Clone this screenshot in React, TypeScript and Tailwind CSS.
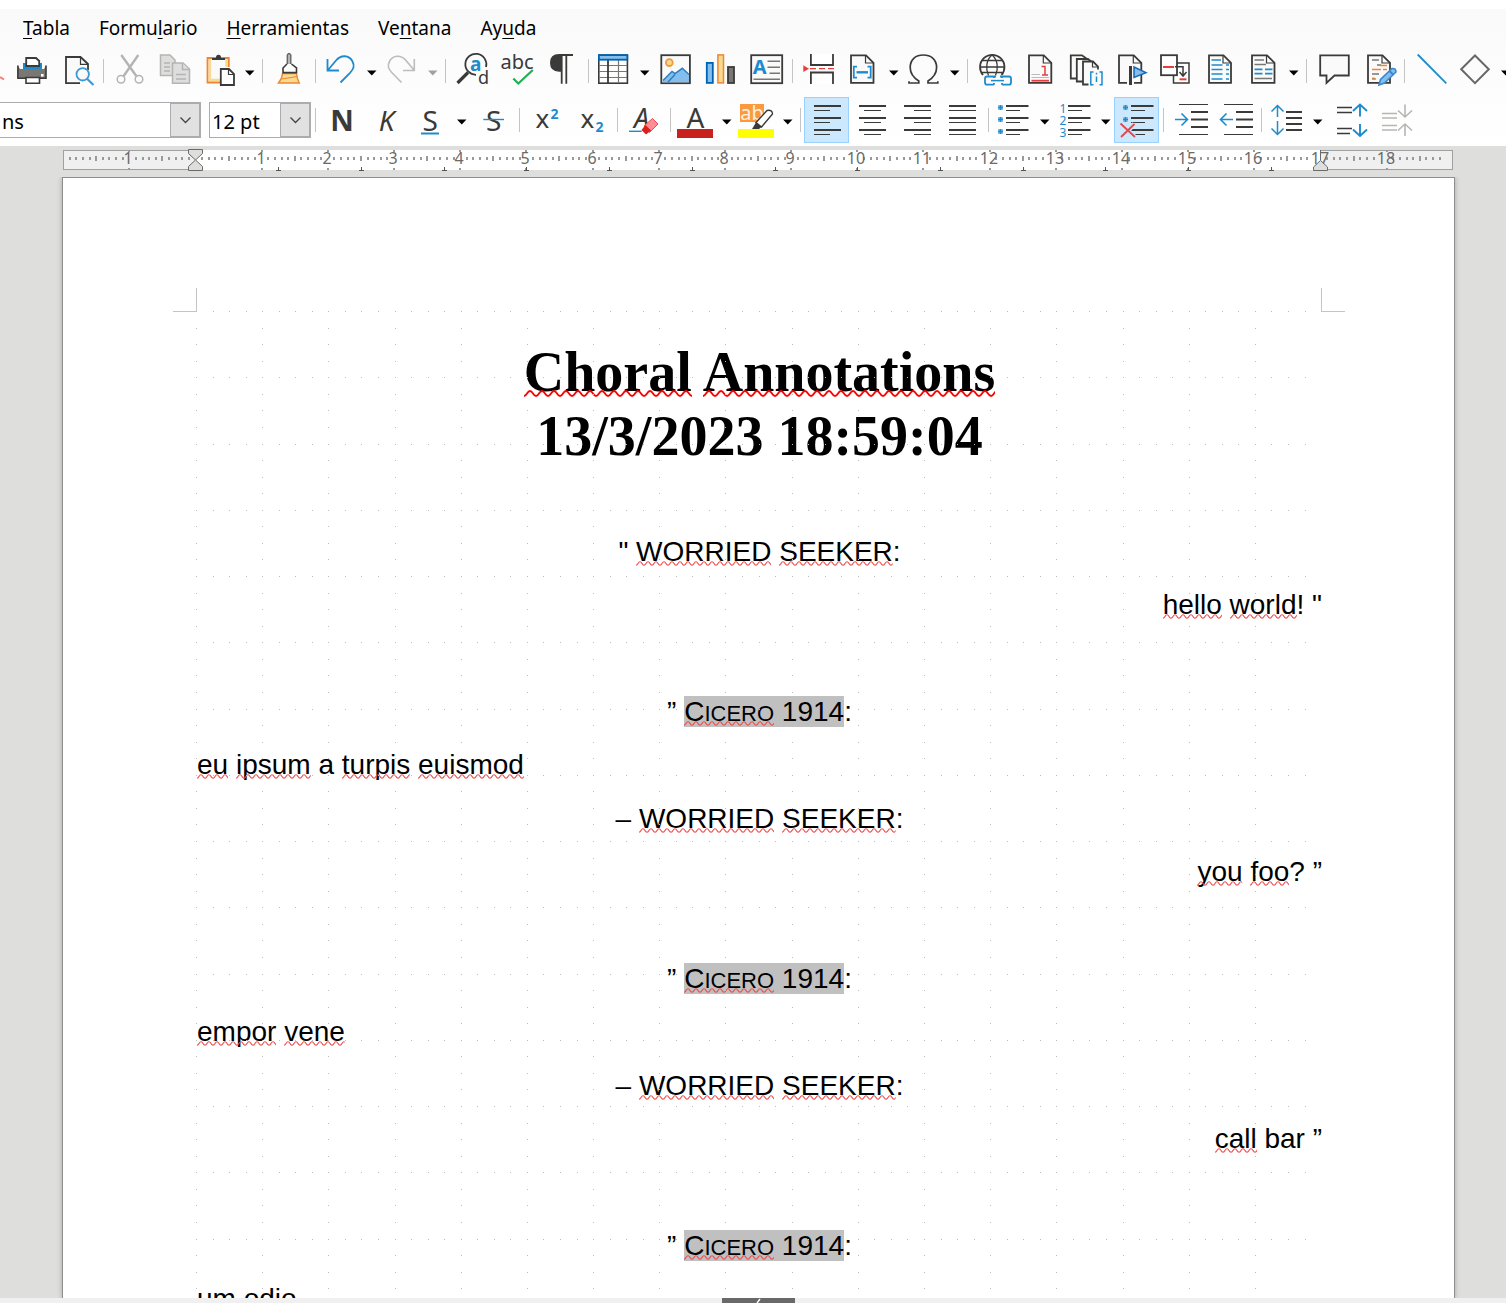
import React from "react";

const DARK = "#3a3a38";
const BLUE = "#1e8bcd";
const LIGHT_BLUE = "#83beec";
const DEEP_BLUE = "#0063b1";
const GRAY = "#797774";
const PALE = "#b4b4b2";
const ORANGE = "#ed8733";
const SAND = "#f8db8f";
const RED = "#e93d3d";

type Kids = { children?: React.ReactNode };

function Icon({ children }: Kids) {
  return (
    <svg
      aria-hidden="true"
      width="33"
      height="33"
      viewBox="0 0 33 33"
      fill="none"
      stroke={DARK}
      strokeWidth="1.8"
      className="block shrink-0 overflow-visible font-['Noto_Sans',sans-serif]"
    >
      {children}
    </svg>
  );
}

/* Sheet of paper with a folded corner, from x to x + w. */
function Sheet({ x = 4, w = 22.5 }: { x?: number; w?: number }) {
  const r = x + w;
  return (
    <>
      <path d={`M${x} 1.3H${r - 7.5}L${r} 8.8V28.8H${x}Z`} fill="#fafafa" />
      <path d={`M${r - 8} 1.3V9H${r}`} strokeWidth="1.2" />
    </>
  );
}

function Glyph({
  x,
  y,
  size,
  fill = DARK,
  bold,
  italic,
  children,
}: Kids & { x: number; y: number; size: number; fill?: string; bold?: boolean; italic?: boolean }) {
  return (
    <text
      x={x}
      y={y}
      fontSize={size}
      fill={fill}
      stroke="none"
      textAnchor="middle"
      fontWeight={bold ? 700 : 400}
      fontStyle={italic ? "italic" : "normal"}
    >
      {children}
    </text>
  );
}

function Paragraph({ long, short }: { long: [number, number]; short: [number, number] }) {
  return (
    <>
      {[3, 15, 27].map((y) => (
        <path key={y} d={`M${long[0]} ${y}H${long[1]}`} strokeWidth="2" />
      ))}
      {[7.5, 19.5, 31.5].map((y) => (
        <path key={y} d={`M${short[0]} ${y}H${short[1]}`} strokeWidth="1" />
      ))}
    </>
  );
}

function ListRows({ x }: { x: number }) {
  return (
    <>
      {[3, 15, 27].map((y) => (
        <React.Fragment key={y}>
          <path d={`M${x} ${y}H${x + 22.5}`} strokeWidth="2" />
          <path d={`M${x} ${y + 4.5}H${x + 14}`} strokeWidth="1" />
        </React.Fragment>
      ))}
    </>
  );
}

function Dots({ x, rows }: { x: number; rows: number[] }) {
  return (
    <>
      {rows.map((y) => (
        <React.Fragment key={y}>
          <rect x={x - 2.5} y={y - 2.5} width="5" height="5" fill="#8cc4e8" stroke="none" />
          <path d={`M${x - 2.5} ${y}H${x + 2.5}M${x} ${y - 2.5}V${y + 2.5}`} stroke={BLUE} strokeWidth="1.6" />
        </React.Fragment>
      ))}
    </>
  );
}

const icons: Record<string, React.ReactNode> = {
  print: (
    <>
      <path d="M2.9 11.5V24.2H31V11.5L29 15H5Z" fill={GRAY} stroke="none" />
      <rect x="2.5" y="15" width="28.5" height="9" fill={GRAY} stroke="none" />
      <path d="M2.9 11.5V24.2H31V11.5" strokeWidth="1.6" />
      <rect x="8" y="9" width="19" height="6" fill={BLUE} stroke="none" />
      <path d="M11.2 12V4H21L24.2 7V12Z" fill="#fff" />
      <path d="M11 23.5V29.2H24.5V23.5Z" fill="#fff" strokeWidth="1.6" />
      <rect x="26" y="20" width="2.6" height="2.6" fill="#fff" stroke="none" />
    </>
  ),
  preview: (
    <>
      <path d="M28 16V10L20.5 3H6V29.2H20" fill="#fafafa" />
      <path d="M20.5 3V10.4H28" strokeWidth="1.2" />
      <circle cx="22.7" cy="20.3" r="6.2" stroke="#3a9ad6" fill="#fafafa" />
      <path d="M27 24.8L33.5 31" stroke="#3a9ad6" strokeWidth="2.2" />
    </>
  ),
  cut: (
    <>
      <path d="M8.3 1L23.5 22.3M25.3 1L10.5 22.3" stroke={PALE} strokeWidth="2.4" />
      <circle cx="8" cy="25.3" r="3.8" stroke={PALE} strokeWidth="1.5" />
      <circle cx="26" cy="25.3" r="3.8" stroke={PALE} strokeWidth="1.5" />
    </>
  ),
  copy: (
    <g stroke={PALE} fill="#dedede" strokeWidth="1.5">
      <path d="M2.5 1H12L17 6V21.5H2.5Z" />
      <path d="M6 9H12M6 13H12M6 17H12" />
      <path d="M14.5 9H25L31.5 15V29.2H14.5Z" />
      <path d="M24.5 9V15.5H31M18 20.5H28M18 25H28" />
    </g>
  ),
  paste: (
    <>
      <path d="M4.5 4V28.5H25.8V4Z" fill="#fafafa" stroke="none" />
      <path d="M7 4V26H17M23.5 4V13" stroke={SAND} strokeWidth="2.4" />
      <path d="M9 4H4.5V28.5H17M22 4H25.8V13" stroke={ORANGE} />
      <path d="M9 6V3.5H13Q13 .8 15.5 .8T18 3.5H22V6Z" fill={DARK} stroke="none" />
      <path d="M17.8 15H26L31 20V31H17.8Z" fill="#fff" />
      <path d="M25.5 15V20.5H31" strokeWidth="1.2" />
    </>
  ),
  brush: (
    <>
      <path d="M10.5 19.5H24.5Q25 25 27.3 29H6.5Q10 25 10.5 19.5Z" fill={SAND} stroke={ORANGE} strokeWidth="1.4" />
      <path d="M10 25L25 22.5" stroke={ORANGE} strokeWidth="1.2" />
      <path d="M15.3 10V1Q17 -2 18.8 1V10" fill="#b5b5b5" stroke="#666" strokeWidth="1.4" />
      <path d="M15 10L11 14V18.6H24.5V14L19.5 10" fill="#fff" strokeWidth="1.6" />
    </>
  ),
  undo: (
    <path
      d="M2.5 5V16.5H14M3 16L11 6.5C16 .5 24 1 27.3 7C30 12 28.5 15 25 18.8L15.5 28.5"
      stroke={BLUE}
    />
  ),
  redo: (
    <path
      d="M28.3 5V16.5H17M28 16L20 6.5C15 .5 7 1 3.7 7C1 12 2.5 15 6 18.8L15.5 28.5"
      stroke="#bcbcba"
      strokeWidth="1.6"
    />
  ),
  find: (
    <>
      <path d="M31 13A10.5 10.5 0 1 0 21 20.8" />
      <path d="M13 18.5L2.5 29" strokeWidth="3.2" />
      <Glyph x={20.8} y={16.5} size={19} fill={BLUE} bold>a</Glyph>
      <Glyph x={28.6} y={29.6} size={18}>d</Glyph>
    </>
  ),
  spell: (
    <>
      <Glyph x={17} y={15} size={20}>abc</Glyph>
      <path d="M13.3 24.5L18.3 29.5L32.8 16" stroke="#1eb053" strokeWidth="2.2" />
    </>
  ),
  pilcrow: (
    <>
      <path d="M16.5 0H14Q5 0 5 8.8T14 17.7H16.5Z" fill={DARK} stroke="none" />
      <path d="M14 1H28M16.7 1V29.7M21.3 1V29.7" />
    </>
  ),
  table: (
    <>
      <rect x=".8" y="1.2" width="28.6" height="28" fill="#fff" stroke={DARK} strokeWidth="1.6" />
      <path d="M1 11.5H29M1 17.5H29M1 23.5H29M20.5 6V29" stroke={GRAY} strokeWidth="1.2" />
      <path d="M10 6V29" />
      <rect x=".9" y="1.1" width="28.4" height="4.6" fill={LIGHT_BLUE} stroke={DEEP_BLUE} />
    </>
  ),
  image: (
    <>
      <rect x="2.3" y="1.2" width="28.6" height="28" fill="#fafafa" />
      <circle cx="10.3" cy="8.6" r="3.4" fill={SAND} stroke="#f0983f" />
      <path d="M3.5 27L13.5 17.5L16 19L23.3 14.5L30 20.5V28.3H3.5Z" fill={LIGHT_BLUE} stroke="none" />
      <path d="M4 26.5L13 17.5L16 19.5L23.3 14.3L30 20.5M9 28L16 20.5" stroke="#2a7fc4" strokeWidth="1.5" />
    </>
  ),
  chart: (
    <>
      <rect x="2.8" y="8.9" width="6" height="20" fill={LIGHT_BLUE} stroke={DEEP_BLUE} />
      <rect x="13.9" y=".9" width="5.6" height="28" fill={SAND} stroke={ORANGE} strokeWidth="1.5" />
      <rect x="24" y="13" width="6" height="16" fill={GRAY} />
    </>
  ),
  textbox: (
    <>
      <rect x="2.2" y="1.2" width="31" height="28" fill="#fafafa" />
      <Glyph x={10.7} y={20.2} size={20} fill={BLUE} bold>A</Glyph>
      <path d="M18.5 7.3H31M18.5 13.3H31M20.5 19.3H31M4.5 25.3H31" stroke={GRAY} strokeWidth="1.6" />
    </>
  ),
  pagebreak: (
    <>
      <path d="M8.9 0V11H31V0M8.9 30V18.5H31V30" fill="#fff" />
      <path d="M1.3 11.3L7 14.7L1.3 18Z" fill={RED} stroke="none" />
      <path d="M8 14.7H32" stroke={RED} strokeWidth="1.2" strokeDasharray="6 3" />
    </>
  ),
  field: (
    <>
      <Sheet x={4} />
      <path d="M10 12.7H6.8V23.7H10M20.5 12.7H23.7V23.7H20.5" stroke={BLUE} />
      <path d="M9.5 18.3H21" stroke={BLUE} strokeWidth="2.4" />
    </>
  ),
  omega: (
    <path
      d="M1 27.3V29H10.8V27C6 24 2.2 20 2.2 13.5C2.2 5 8 1 15.3 1S28.6 5 28.6 13.5C28.6 20 24.8 24 20 27V29H29.8V27.3"
      strokeWidth="1.7"
    />
  ),
  link: (
    <>
      <path d="M6 21A12.2 12.2 0 1 1 24.5 21" />
      <path d="M11.5 21.5C8.5 15 9 6 15 1C21 6 21.500 15 18.5 21.500" strokeWidth="1.3" />
      <path d="M3 13H27M5 6.5H25M4.5 18.5H25.5" strokeWidth="1.3" />
      <path
        d="M19 22.5H10Q8 22.5 8 24.5V28.5Q8 30.7 10 30.7H17M23 22.500H32Q34 22.5 34 24.5V28.5Q34 30.7 32 30.7H25M17 22.500V24M25 22.500V24M17 29V30.7M25 29V30.7"
        fill="#fafafa"
        stroke={BLUE}
      />
      <path d="M14 26.6H27" stroke={BLUE} strokeWidth="1.5" />
    </>
  ),
  footnote: (
    <>
      <Sheet x={7} w={22.3} />
      <path d="M9.5 20.5H18M9.5 23.5H27" stroke="#bbb" strokeWidth="1.1" />
      <path d="M9.5 26.7H27" stroke={RED} />
      <path d="M19.5 12.5H23V21M20 21H26" stroke={RED} strokeWidth="1.5" />
    </>
  ),
  endnote: (
    <>
      <path d="M3.8 1.3H15L20 5V24.5H3.8Z" fill="#fafafa" />
      <path d="M9.8 5H21L26 9V27.5H9.8Z" fill="#fafafa" />
      <path d="M16 7.5H26L31 12.5V30.5H16Z" fill="#fafafa" />
      <path d="M25.5 7.5V13H31" strokeWidth="1.2" />
      <rect x="21.500" y="15.500" width="16" height="17" fill="#fafafa" stroke="none" />
      <path d="M26.5 18H23.8V30.7H26.5M32.5 18H35V30.7H32.5M29.5 22.5V28M29.5 18.8V20.5" stroke={BLUE} strokeWidth="1.5" />
    </>
  ),
  bookmark: (
    <>
      <Sheet x={7} w={22.3} />
      <path d="M18.5 11V31.5" stroke="#fafafa" strokeWidth="7" />
      <path d="M18.5 12V31" strokeWidth="3" />
      <path d="M22 13L34 18.6L22 23.5Z" fill={LIGHT_BLUE} stroke="#1768b8" strokeWidth="1.5" />
    </>
  ),
  crossref: (
    <>
      <rect x="16.5" y="9" width="15.5" height="20" fill="#fff" strokeWidth="1.5" />
      <rect x="4" y="1.2" width="16" height="20" fill="#fff" />
      <path d="M6 13H17" stroke={RED} strokeWidth="2" />
      <path d="M18 12.7H26V21.5M22.5 18L26 22L29.5 18" strokeWidth="1.5" />
      <path d="M22.5 25.3H29.5" stroke={RED} strokeWidth="2" />
    </>
  ),
  headers: (
    <>
      <Sheet x={7} w={22} />
      <path d="M9.5 6H19M9.5 11H20.5M9.5 15.5H20.5M9.5 20H20.5M9.5 25H20.5M24 11H27M24 15.5H27M24 20H27M24 25H27" stroke={BLUE} strokeWidth="1.7" />
    </>
  ),
  columns: (
    <>
      <Sheet x={5} w={22.5} />
      <path d="M7.5 6H17M7.5 10.5H19M7.5 24.5H25" stroke={GRAY} strokeWidth="1.4" />
      <path d="M7.5 15.3H15.5M18 15.3H25.5M7.5 19.7H15.5M18 19.7H25.5" stroke={BLUE} strokeWidth="1.7" />
    </>
  ),
  comment: <path d="M4.2 1.3H32.8V21.5H18.5L10.5 29V21.5H4.2Z" fill="#fafafa" />,
  track: (
    <>
      <Sheet x={7} w={22} />
      <path d="M11 6H18M16 11H20M11 20H18M11 24.5H14" stroke={GRAY} strokeWidth="1.3" />
      <path d="M11 15.5H20M19 11.5H26M22 15.5H26M11 25H15" stroke={ORANGE} strokeWidth="1.6" />
      <path d="M18 31L19.5 25.5L31 14.5Q35 14 35 18L23.5 29Z" fill={LIGHT_BLUE} stroke="#3a87cf" strokeWidth="1.6" />
      <path d="M28.5 17L32.5 21" stroke="#3a87cf" />
    </>
  ),
  line: <path d="M3.7 .5L32.3 29.3" stroke={BLUE} />,
  diamond: <path d="M16 1.5L29.8 15.3L16 29.2L2.2 15.3Z" stroke="#666" strokeWidth="2" />,
  bold: <Glyph x={17} y={28} size={29} bold>N</Glyph>,
  italic: <Glyph x={16.5} y={28} size={28} italic>K</Glyph>,
  underline: (
    <>
      <Glyph x={15.3} y={28} size={28}>S</Glyph>
      <path d="M6 30.5H24" stroke={BLUE} strokeWidth="2" />
    </>
  ),
  strike: (
    <>
      <Glyph x={17.7} y={28} size={28}>S</Glyph>
      <path d="M7.3 16.5H28" stroke={BLUE} strokeWidth="1.4" />
    </>
  ),
  superscript: (
    <>
      <Glyph x={13.3} y={25} size={26}>x</Glyph>
      <Glyph x={25.5} y={15.7} size={14} fill={BLUE} bold>2</Glyph>
    </>
  ),
  subscript: (
    <>
      <Glyph x={13.3} y={25} size={26}>x</Glyph>
      <Glyph x={25.5} y={29} size={14} fill={BLUE} bold>2</Glyph>
    </>
  ),
  clear: (
    <>
      <Glyph x={14.5} y={25} size={27} italic>A</Glyph>
      <path d="M2 28.3H14.7" stroke={BLUE} strokeWidth="1.4" />
      <path d="M17 23L25.5 15.5L31 21L22.5 29.5Z" fill="#ff8d93" stroke="#f0494f" strokeWidth="1" />
      <path d="M14.5 27L18.5 22L24 27.5L19 31.5Z" fill="#d8201c" stroke="none" />
    </>
  ),
  fontcolor: (
    <>
      <Glyph x={15.5} y={25} size={28}>A</Glyph>
      <rect x="-3" y="26" width="36" height="9" fill="#c9211e" stroke="none" />
    </>
  ),
  highlight: (
    <>
      <rect x="-1" y="1" width="24" height="18" fill="#fb9a3c" stroke="none" />
      <Glyph x={11} y={17} size={20} fill="#fff0dc">ab</Glyph>
      <path d="M15 19.500L26 7.5Q31.5 6.5 31.5 11L20.500 24Z" fill="#fff" strokeWidth="1.4" />
      <path d="M11 26L15 19.5L20.5 24L18 26Z" fill={DARK} stroke="none" />
      <rect x="-3" y="26" width="36" height="9" fill="#ffff00" stroke="none" />
    </>
  ),
  left: <Paragraph long={[4, 31]} short={[4, 20]} />,
  center: <Paragraph long={[4, 31]} short={[9, 26]} />,
  right: <Paragraph long={[4, 31]} short={[14, 31]} />,
  justify: <Paragraph long={[4, 31]} short={[4, 31]} />,
  bullets: (
    <>
      <Dots x={2.5} rows={[4.5, 16.5, 28.5]} />
      <ListRows x={8} />
    </>
  ),
  numbers: (
    <>
      <Glyph x={4} y={9.5} size={12} fill={BLUE}>1</Glyph>
      <Glyph x={4} y={21.5} size={12} fill={BLUE}>2</Glyph>
      <Glyph x={4} y={33.5} size={12} fill={BLUE}>3</Glyph>
      <ListRows x={9} />
    </>
  ),
  nolist: (
    <>
      <Dots x={5.5} rows={[4.5, 16.5]} />
      <ListRows x={11} />
      <path d="M1 21L14.5 34M14.5 21L1 34" stroke="#cce8ff" strokeWidth="5" />
      <path d="M.5 20.5L15 34M14.5 21L1 34" stroke="#e0484c" strokeWidth="1.8" />
    </>
  ),
  indent: (
    <>
      <path d="M6 1.5H35M6 31.5H35" strokeWidth="1.2" />
      <path d="M18 9H35M18 16.5H35M18 24H35" strokeWidth="2" />
      <path d="M2 16.5H14.5M8.5 10.5L14.5 16.5L8.5 22.5" stroke={BLUE} strokeWidth="1.6" />
    </>
  ),
  outdent: (
    <>
      <path d="M6 1.5H35M6 31.5H35" strokeWidth="1.2" />
      <path d="M18 9H35M18 16.5H35M18 24H35" strokeWidth="2" />
      <path d="M2.5 16.5H15M8.5 10.5L2.5 16.5L8.5 22.5" stroke={BLUE} strokeWidth="1.6" />
    </>
  ),
  spacing: (
    <>
      <path d="M15 9H31M15 15H31M15 21H31M15 27H31" strokeWidth="2" />
      <path d="M6.5 2.5V14M.5 8.5L6.5 2.5L12.5 8.5M6.5 18V31.5M.5 25.5L6.5 31.5L12.5 25.5" stroke={BLUE} strokeWidth="1.5" />
    </>
  ),
  spaceMore: (
    <>
      <path d="M5 4.5H20M5 9.5H20M5 25.5H20M5 30.5H18" strokeWidth="1.7" />
      <path d="M28 1.5V13.5M21 8L28 1.5L35 8M28 21V33M21 26.5L28 33L35 26.5" stroke={BLUE} strokeWidth="1.9" />
    </>
  ),
  spaceLess: (
    <g stroke="#b6b6b4" strokeWidth="1.6">
      <path d="M5 10.5H20M5 15H20M5 22.5H20M5 27H20" />
      <path d="M28 1.5V13.5M21 7.5L28 14L35 7.5M28 21V33M21 27.5L28 21L35 27.5" />
    </g>
  ),
};

function Tool({ name, label, active }: { name: string; label: string; active?: boolean }) {
  return (
    <button
      type="button"
      aria-label={label}
      aria-pressed={active}
      className={
        active
          ? "flex h-[46px] w-[45px] shrink-0 items-start border border-[#99d1ff] bg-[#cce8ff] px-[5px] pt-[5px]"
          : "flex h-[46px] w-[45px] shrink-0 items-start border border-transparent px-[5px] pt-[5px]"
      }
    >
      <Icon>{icons[name]}</Icon>
    </button>
  );
}

function Drop({ label, muted }: { label: string; muted?: boolean }) {
  return (
    <button type="button" aria-label={label} className="flex h-[46px] w-4 shrink-0 items-center justify-center">
      <svg aria-hidden="true" width="10" height="6" viewBox="0 0 10 6" className="mt-1 block">
        <path d="M0 .5H9.5L4.8 5.5Z" fill={muted ? "#a0a0a0" : "#000"} />
      </svg>
    </button>
  );
}

function Sep() {
  return (
    <div className="flex h-[46px] w-2 shrink-0 items-center justify-center">
      <div className="h-6 w-px bg-[#c4c4c4]" />
    </div>
  );
}

function Combo({ id, label, value, field }: { id: string; label: string; value: string; field: string }) {
  return (
    <div className="flex h-9 shrink-0 border border-[#acacb0] bg-white">
      <input
        id={id}
        aria-label={label}
        defaultValue={value}
        className={`${field} min-w-0 bg-transparent pt-[3px] font-['Noto_Sans',sans-serif] text-[20px] text-black outline-none`}
      />
      <button
        type="button"
        aria-label={`${label}: abrir`}
        className="flex w-[30px] items-center justify-center border border-[#acacb0] bg-[#e1e1e1]"
      >
        <svg aria-hidden="true" width="11" height="7" viewBox="0 0 11 7" fill="none" stroke="#444" strokeWidth="1.3">
          <path d="M.5 .5L5.5 5.5L10.5 .5" />
        </svg>
      </button>
    </div>
  );
}

const menus: [string, string, string][] = [
  ["", "T", "abla"],
  ["Formu", "l", "ario"],
  ["", "H", "erramientas"],
  ["Ve", "n", "tana"],
  ["Ay", "u", "da"],
];

const CM = 66.18;

function Ruler() {
  const zero = 132.5;
  const marks: React.ReactNode[] = [];
  for (let i = -19; i <= 189; i++) {
    const x = Math.round(zero + (i * CM) / 10);
    if (i === 0 || i === 170) continue;
    if (i % 10 === 0) {
      marks.push(<rect key={i} x={x - 1} y="0" width="2" height="2" />);
      marks.push(<rect key={`${i}b`} x={x - 1} y="18" width="2" height="2" />);
    } else if (i % 5 === 0) {
      marks.push(<rect key={i} x={x - 1} y="6" width="2" height="5" />);
    } else if (!(i > 95 && i % 10 === 9)) {
      marks.push(<rect key={i} x={x - 1} y="7" width="2" height="3" />);
    }
  }
  const tabs = Array.from({ length: 13 }, (_, k) => Math.round(zero + (k + 1) * 1.25 * CM) + 0.5);
  const labels = [-1, ...Array.from({ length: 18 }, (_, k) => k + 1)];
  return (
    <svg
      role="img"
      aria-label="Regla horizontal"
      width="1392"
      height="23"
      viewBox="0 0 1392 23"
      className="block shrink-0 overflow-visible font-['Noto_Sans',sans-serif]"
    >
      <rect x=".5" y=".5" width="1389" height="19" fill="#f0f0f0" stroke="#a0a0a0" />
      <rect x="132" y="0" width="1125" height="20" fill="#fff" />
      <g fill="#9a9a9a">{marks}</g>
      <g fill="#6a6a6a" fontSize="16" textAnchor="middle">
        {labels.map((n) => (
          <text key={n} x={Math.round(zero + n * CM) - 1} y="14">
            {Math.abs(n)}
          </text>
        ))}
      </g>
      <path d={tabs.map((x) => `M${x} 17V20M${x - 2.5} 20.5H${x + 2.5}`).join("")} stroke="#555" />
      <g fill="#dededc" stroke="#6a6a6a">
        <path d="M125.5 -.5H139.5V3.5L132.5 10L125.5 3.5Z" />
        <path d="M125.5 20.5H139.5V16.5L132.5 10L125.5 16.5Z" />
        <path d="M1257.5 0V10" />
        <path d="M1250.5 20.5H1264.5V17L1257.5 10.5L1250.5 17Z" />
      </g>
    </svg>
  );
}

/* Snap grid: one line of dots per centimetre, four dots between lines. */
function DotGrid() {
  let d = "";
  for (let row = 0; row <= 64; row++) {
    const y = Math.round((row * 66.25) / 4) + 0.5;
    for (let col = 0; col <= 67; col++) {
      if (row % 4 !== 0 && col % 4 !== 0) continue;
      if (row === 0 && col === 0) continue;
      d += `M${Math.round((col * CM) / 4)} ${y}h1`;
    }
  }
  return (
    <svg aria-hidden="true" className="pointer-events-none absolute -top-px -left-px h-full w-full">
      <path d={d} stroke="#bdbdbd" />
    </svg>
  );
}

/* Word with the spell checker's wave below it. */
function Sp({ children, big }: Kids & { big?: boolean }) {
  return (
    <span className="relative">
      {children}
      <svg
        aria-hidden="true"
        className={
          big
            ? "pointer-events-none absolute bottom-[6px] left-0 h-[7px] w-full"
            : "pointer-events-none absolute bottom-[1px] left-0 h-[5px] w-full"
        }
      >
        <rect width="100%" height="100%" fill={big ? "url(#wave-big)" : "url(#wave-small)"} />
      </svg>
    </span>
  );
}

function WaveDefs() {
  return (
    <svg aria-hidden="true" className="absolute h-0 w-0">
      <defs>
        <pattern id="wave-big" width="12" height="7" patternUnits="userSpaceOnUse">
          <path d="M-3 3.5Q0 8.5 3 3.5T9 3.5T15 3.5" fill="none" stroke="#ff0000" strokeWidth="1.8" />
        </pattern>
        <pattern id="wave-small" width="8" height="5" patternUnits="userSpaceOnUse">
          <path d="M-2 2.5Q0 6 2 2.5T6 2.5T10 2.5" fill="none" stroke="#f04545" strokeWidth="1.1" />
        </pattern>
      </defs>
    </svg>
  );
}

function Seeker({ lead }: { lead: string }) {
  return (
    <p className="text-center leading-[53px]">
      {lead} <Sp>WORRIED</Sp> <Sp>SEEKER</Sp>:
    </p>
  );
}

function Cicero() {
  return (
    <p className="text-center leading-[53px]">
      ”{" "}
      <span className="bg-[#c0c0c0]">
        <Sp>
          C<span className="text-[22px] leading-none">ICERO</span>
        </Sp>{" "}
        1914
      </span>
      :
    </p>
  );
}

function Line({ right, children }: Kids & { right?: boolean }) {
  return <p className={right ? "text-right leading-[54px]" : "leading-[54px]"}>{children}</p>;
}

function Blank() {
  return <div className="h-[53px]" />;
}

export default function App() {
  return (
    <div className="flex h-screen flex-col overflow-hidden bg-[#dededc]">
      <WaveDefs />
      <header className="shrink-0 bg-linear-to-b from-[#f9f9f9] to-white pb-[3px]">
        <div className="h-[9px] bg-white" />
        <nav
          aria-label="Menú principal"
          className="flex h-9 items-center gap-[29px] pt-[2px] pl-[23px] font-['Noto_Sans',sans-serif] text-[19px] text-black"
        >
          {menus.map(([a, key, b]) => (
            <button key={a + key + b} type="button" className="whitespace-nowrap">
              {a}
              <span className="underline decoration-1 underline-offset-3">{key}</span>
              {b}
            </button>
          ))}
        </nav>

        <div role="toolbar" aria-label="Estándar" className="mt-[3px] flex h-[49px] items-start overflow-hidden">
          <button type="button" aria-label="Exportar a PDF" className="flex h-[46px] w-[9px] shrink-0 items-center">
            <svg aria-hidden="true" width="5" height="8" viewBox="0 0 5 8" className="mt-3 block">
              <path d="M0 4L4 6.5" stroke="#f77" strokeWidth="2" />
            </svg>
          </button>
          <Tool name="print" label="Imprimir" />
          <Tool name="preview" label="Previsualizar impresión" />
          <Sep />
          <Tool name="cut" label="Cortar" />
          <Tool name="copy" label="Copiar" />
          <Tool name="paste" label="Pegar" />
          <Drop label="Opciones de pegado" />
          <Sep />
          <Tool name="brush" label="Clonar formato" />
          <Sep />
          <Tool name="undo" label="Deshacer" />
          <Drop label="Lista de deshacer" />
          <Tool name="redo" label="Rehacer" />
          <Drop label="Lista de rehacer" muted />
          <Sep />
          <Tool name="find" label="Buscar y reemplazar" />
          <Tool name="spell" label="Ortografía" />
          <Tool name="pilcrow" label="Marcas de formato" />
          <Sep />
          <Tool name="table" label="Insertar tabla" />
          <Drop label="Tamaño de tabla" />
          <Tool name="image" label="Insertar imagen" />
          <Tool name="chart" label="Insertar gráfico" />
          <Tool name="textbox" label="Insertar cuadro de texto" />
          <Sep />
          <Tool name="pagebreak" label="Insertar salto de página" />
          <Tool name="field" label="Insertar campo" />
          <Drop label="Campos" />
          <Tool name="omega" label="Insertar símbolo" />
          <Drop label="Símbolos" />
          <Sep />
          <Tool name="link" label="Insertar hiperenlace" />
          <Tool name="footnote" label="Insertar nota al pie" />
          <Tool name="endnote" label="Insertar nota al final" />
          <Tool name="bookmark" label="Insertar marcador" />
          <Tool name="crossref" label="Insertar referencia" />
          <Tool name="headers" label="Cabeceras" />
          <Tool name="columns" label="Columnas" />
          <Drop label="Más columnas" />
          <Sep />
          <Tool name="comment" label="Insertar comentario" />
          <Tool name="track" label="Control de cambios" />
          <Sep />
          <Tool name="line" label="Insertar línea" />
          <Tool name="diamond" label="Formas" />
          <Drop label="Más formas" />
        </div>

        <div role="toolbar" aria-label="Formato" className="flex items-start overflow-hidden">
          <div className="-ml-px mt-[5px] flex gap-2">
            <Combo id="font-name" label="Nombre de la letra" value="ns" field="w-[170px] pl-[2px]" />
            <Combo id="font-size" label="Tamaño de letra" value="12 pt" field="w-[70px] pl-[2px]" />
          </div>
          <div className="flex">
            <Sep />
            <Tool name="bold" label="Negrita" />
            <Tool name="italic" label="Cursiva" />
            <Tool name="underline" label="Subrayado" />
            <Drop label="Estilos de subrayado" />
            <Tool name="strike" label="Tachado" />
            <Sep />
            <Tool name="superscript" label="Superíndice" />
            <Tool name="subscript" label="Subíndice" />
            <Sep />
            <Tool name="clear" label="Limpiar formato" />
            <Sep />
            <Tool name="fontcolor" label="Color de letra" />
            <Drop label="Colores de letra" />
            <Tool name="highlight" label="Color de resalte" />
            <Drop label="Colores de resalte" />
            <Sep />
            <Tool name="left" label="Alinear a la izquierda" active />
            <Tool name="center" label="Centrar" />
            <Tool name="right" label="Alinear a la derecha" />
            <Tool name="justify" label="Justificar" />
            <Sep />
            <Tool name="bullets" label="Lista no ordenada" />
            <Drop label="Estilos de viñeta" />
            <Tool name="numbers" label="Lista ordenada" />
            <Drop label="Estilos de numeración" />
            <Tool name="nolist" label="Sin lista" active />
            <Sep />
            <Tool name="indent" label="Aumentar sangría" />
            <Tool name="outdent" label="Reducir sangría" />
            <Sep />
            <Tool name="spacing" label="Interlineado" />
            <Drop label="Valores de interlineado" />
            <Tool name="spaceMore" label="Aumentar espacio entre párrafos" />
            <Tool name="spaceLess" label="Reducir espacio entre párrafos" />
          </div>
        </div>
      </header>

      <div className="h-[31px] shrink-0 pt-1 pl-[63px]">
        <Ruler />
      </div>

      <main className="flex min-h-0 flex-1 overflow-hidden">
        <article className="mr-[51px] ml-[62px] flex-1 border border-b-0 border-[#8e8e8e] bg-white shadow-[0_0_5px_rgba(0,0,0,0.25)]">
          <div className="flex h-[134px] items-end justify-between pr-[109px] pl-[110px]">
            <div className="h-6 w-6 border-r border-b border-[#c4c4c4]" />
            <div className="h-6 w-6 border-b border-l border-[#c4c4c4]" />
          </div>
          <div className="relative mr-[132px] ml-[134px] pt-[28px] font-['Liberation_Sans',sans-serif] text-[28px] text-black">
            <h1 className="mb-[57px] text-center font-['Liberation_Serif',serif] text-[56px] leading-[64px] font-bold">
              <Sp big>Choral</Sp> <Sp big>Annotations</Sp>
              <br />
              13/3/2023 18:59:04
            </h1>
            <Seeker lead={'"'} />
            <Line right>
              <Sp>hello</Sp> <Sp>world</Sp>! "
            </Line>
            <Blank />
            <Cicero />
            <Line>
              <Sp>eu</Sp> <Sp>ipsum</Sp> a <Sp>turpis</Sp> <Sp>euismod</Sp>
            </Line>
            <Seeker lead="–" />
            <Line right>
              <Sp>you</Sp> <Sp>foo</Sp>? ”
            </Line>
            <Blank />
            <Cicero />
            <Line>
              <Sp>empor</Sp> <Sp>vene</Sp>
            </Line>
            <Seeker lead="–" />
            <Line right>
              <Sp>call</Sp> bar ”
            </Line>
            <Blank />
            <Cicero />
            <Line>
              <Sp>um</Sp> <Sp>odio</Sp>
            </Line>
            <DotGrid />
          </div>
        </article>
      </main>

      <footer className="flex h-[5px] shrink-0 bg-[#f0f0f0] pl-[722px]">
        <div className="flex w-[73px] justify-center bg-[#696969]">
          <svg aria-hidden="true" width="6" height="5" viewBox="0 0 6 5">
            <path d="M1 5L4 1" stroke="#fff" strokeWidth="1.4" />
          </svg>
        </div>
      </footer>
    </div>
  );
}
